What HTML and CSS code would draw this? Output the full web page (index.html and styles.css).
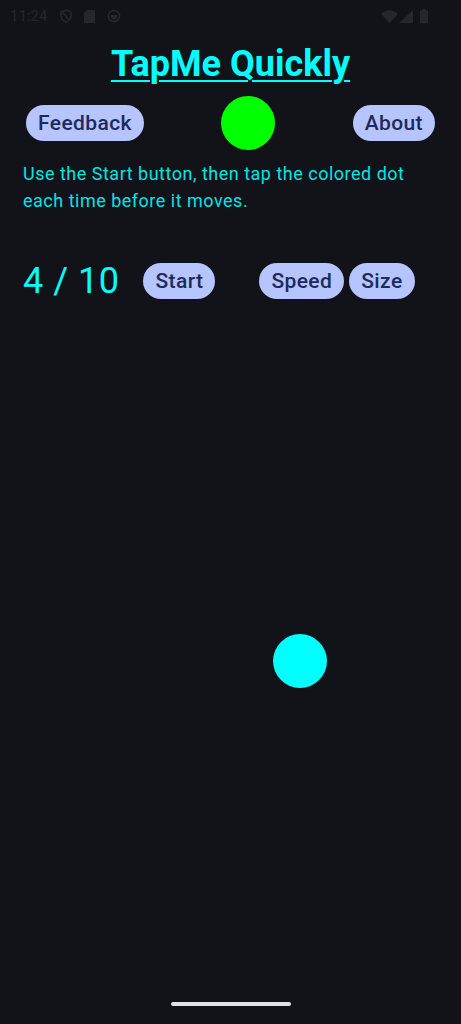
FILE: index.html
```html
<!DOCTYPE html>
<html lang="en">
<head>
    <meta charset="UTF-8" />
    <meta name="viewport" content="width=device-width, initial-scale=1.0"/>
    <title>TapMe Quickly</title>
    <link rel="stylesheet" href="styles.css">
</head>
<body>
    <div class="screen">
        <!-- Status bar -->
        <div class="status-bar">
            <div class="status-left">
                <span class="clock">11:24</span>
                <svg class="sb-icon" width="12" height="14" viewBox="0 0 12 14">
                    <path d="M6 1 L11 3 V7 C11 10 8.5 12 6 13 C3.5 12 1 10 1 7 V3 Z" fill="none" stroke="#25272c" stroke-width="1.6"/>
                    <path d="M2.5 3.5 L9.5 11" stroke="#25272c" stroke-width="1.6"/>
                </svg>
                <svg class="sb-icon" width="11" height="13" viewBox="0 0 11 13">
                    <path d="M3 0 H11 V13 H0 V3 Z" fill="#25272c"/>
                </svg>
                <svg class="sb-icon" width="14" height="14" viewBox="0 0 14 14">
                    <circle cx="7" cy="7" r="5.6" fill="none" stroke="#25272c" stroke-width="1.6"/>
                    <path d="M3.5 6 H10.5 C10.5 9 9 10.5 7 10.5 C5 10.5 3.5 9 3.5 6 Z" fill="#25272c"/>
                </svg>
            </div>
            <div class="status-right">
                <svg width="17" height="13" viewBox="0 0 17 13">
                    <path d="M0 4 C5 -1 12 -1 17 4 L8.5 13 Z" fill="#25272c"/>
                </svg>
                <svg width="14" height="13" viewBox="0 0 14 13">
                    <path d="M14 0 V13 H0 Z" fill="#25272c"/>
                </svg>
                <svg class="battery" width="8" height="14" viewBox="0 0 8 14">
                    <path d="M2.5 0 H5.5 V1.5 H8 V14 H0 V1.5 H2.5 Z" fill="#25272c"/>
                </svg>
            </div>
        </div>

        <h1 class="title">TapMe Quickly</h1>

        <div class="top-row">
            <button class="pill">Feedback</button>
            <div class="dot dot-green"></div>
            <button class="pill">About</button>
        </div>

        <p class="help">Use the Start button, then tap the colored dot each time before it moves.</p>

        <div class="game-row">
            <span class="score">4 / 10</span>
            <button class="pill start-btn">Start</button>
            <button class="pill speed-btn">Speed</button>
            <button class="pill">Size</button>
        </div>

        <div class="play-area">
            <div class="dot dot-target"></div>
        </div>

        <div class="nav-bar">
            <div class="nav-handle"></div>
        </div>
    </div>
</body>
</html>
```

FILE: styles.css
```css
/* Basic Styles */
body {
    margin: 0;
    font-family: Roboto, 'Noto Sans', sans-serif;
    background: #111318;
    color: #00ffff;
}

.screen {
    width: 461px;
    height: 1024px;
    display: flex;
    flex-direction: column;
}

.status-bar {
    height: 32px;
    display: flex;
    justify-content: space-between;
    align-items: center;
    padding: 0 33px 0 10px;
}

.status-left,
.status-right {
    display: flex;
    align-items: center;
}

.clock {
    font-size: 15px;
    color: #25272c;
    margin-right: 13px;
}

.sb-icon {
    margin-right: 12px;
}

.status-right svg {
    margin-left: 1px;
}

.status-right .battery {
    margin-left: 7px;
}

.title {
    margin: 11px 0 0;
    text-align: center;
    font-size: 36px;
    font-weight: 700;
    line-height: 42px;
    text-decoration: underline;
    text-decoration-thickness: 2px;
    text-underline-offset: 4px;
}

.top-row {
    display: flex;
    justify-content: space-between;
    align-items: center;
    padding: 0 26px;
    margin-top: 11px;
}

.pill {
    height: 36px;
    padding: 0 12px;
    border: none;
    border-radius: 18px;
    background: #b6c4ff;
    color: #1c2b5a;
    font-family: Roboto, sans-serif;
    font-size: 21px;
    font-weight: 500;
    letter-spacing: 0.4px;
}

.dot {
    width: 54px;
    height: 54px;
    border-radius: 50%;
}

.dot-green {
    background: #00ff00;
}

.help {
    margin: 10px 23px 0;
    font-size: 18px;
    line-height: 27px;
    letter-spacing: 0.5px;
    color: #00e5e5;
}

.game-row {
    display: flex;
    align-items: center;
    padding: 0 23px;
    margin-top: 46px;
}

.score {
    font-size: 36px;
    letter-spacing: 0.5px;
    margin-right: 24px;
}

.start-btn {
    margin-right: 44px;
}

.speed-btn {
    margin-right: 5px;
}

.play-area {
    flex: 1;
    position: relative;
}

.dot-target {
    position: absolute;
    left: 273px;
    top: 332px;
    background: #00ffff;
}

.nav-bar {
    height: 30px;
    display: flex;
    justify-content: center;
}

.nav-handle {
    width: 120px;
    height: 4px;
    margin-top: 8px;
    border-radius: 2px;
    background: #e2e2e2;
}
```
